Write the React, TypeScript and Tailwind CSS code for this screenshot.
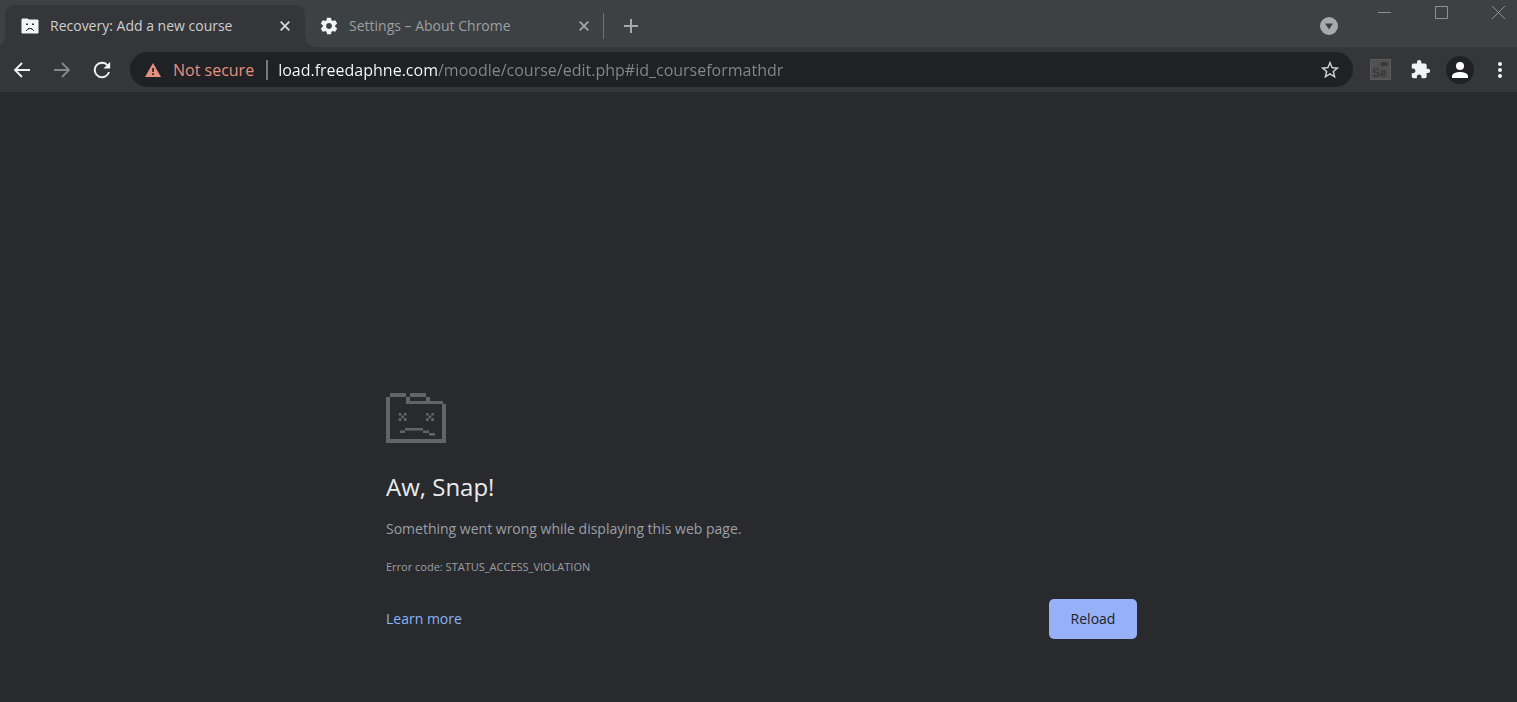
import type { ReactNode } from 'react';

const FolderFavicon = () => (
  <svg width="18" height="16" viewBox="0 0 18 16" aria-hidden="true">
    <path d="M1 1h5.500l1.500 1h9v13H1z" fill="#f1f3f4" stroke="#f1f3f4" strokeWidth="1" strokeLinejoin="round" />
    <path d="M5 5.500h2v1.500H5zM11 5.500h2v1.500h-2zM7 10h4v1H7zM6 11h1.500v1H6zM10.500 11H12v1h-1.500zM5 12h1v1H5zM12 12h1v1h-1z" fill="#35363a" />
  </svg>
);

const Gear = () => (
  <svg width="20" height="20" viewBox="0 0 24 24" fill="#f1f3f4" aria-hidden="true">
    <path d="M19.43 12.98c.04-.32.07-.64.07-.98s-.03-.66-.07-.98l2.11-1.65c.19-.15.24-.42.12-.64l-2-3.46c-.12-.22-.39-.3-.61-.22l-2.49 1c-.52-.4-1.08-.73-1.69-.98l-.38-2.65A.49.49 0 0 0 14 2h-4c-.25 0-.46.18-.49.42l-.38 2.65c-.61.25-1.17.59-1.69.98l-2.49-1c-.23-.09-.49 0-.61.22l-2 3.46c-.13.22-.07.49.12.64l2.11 1.65c-.04.32-.07.65-.07.98s.03.66.07.98l-2.11 1.65c-.19.15-.24.42-.12.64l2 3.46c.12.22.39.3.61.22l2.49-1c.52.4 1.08.73 1.69.98l.38 2.65c.03.24.24.42.49.42h4c.25 0 .46-.18.49-.42l.38-2.65c.61-.25 1.17-.59 1.69-.98l2.49 1c.23.09.49 0 .61-.22l2-3.46c.12-.22.07-.49-.12-.64l-2.11-1.65zM12 15.5c-1.93 0-3.5-1.57-3.5-3.5s1.57-3.5 3.5-3.5 3.5 1.57 3.5 3.5-1.57 3.5-3.5 3.5z" />
  </svg>
);

const Cross = () => (
  <svg width="10" height="10" viewBox="0 0 10 10" stroke="currentColor" strokeWidth="1.8" aria-hidden="true">
    <path d="M.7.7l8.6 8.6M9.3.7L.7 9.3" />
  </svg>
);

const Arrow = ({ flip = false }: { flip?: boolean }) => (
  <svg width="18" height="16" viewBox="0 0 18 16" fill="none" stroke="currentColor" strokeWidth="1.8" className={flip ? 'rotate-180' : ''} aria-hidden="true">
    <path d="M17 8H2M9 1L2 8l7 7" />
  </svg>
);

const ReloadIcon = () => (
  <svg width="22" height="22" viewBox="0 0 24 24" fill="currentColor" aria-hidden="true">
    <path d="M18.400 5.600A9 9 0 1 0 20.700 14.300h-2.100A6.900 6.900 0 1 1 12 5.100c1.900 0 3.600.8 4.900 2L13.600 10.400H20.900V3.100z" />
  </svg>
);

const Warning = () => (
  <svg width="16" height="14" viewBox="0 0 16 14" aria-hidden="true">
    <path d="M8 0l8 14H0z" fill="#e6907f" />
    <path d="M7.2 5h1.7v4H7.2zM7.2 10.3h1.7V12H7.2z" fill="#202124" />
  </svg>
);

const Star = () => (
  <svg width="22" height="22" viewBox="0 0 24 24" fill="#cfd1d4" aria-hidden="true">
    <path d="M22 9.24l-7.19-.62L12 2 9.19 8.63 2 9.24l5.46 4.73L5.82 21 12 17.27 18.18 21l-1.63-7.03L22 9.24zM12 15.4l-3.76 2.27 1-4.28-3.32-2.88 4.38-.38L12 6.1l1.71 4.04 4.38.38-3.32 2.88 1 4.28L12 15.4z" />
  </svg>
);

const Selenium = () => (
  <svg width="21" height="21" viewBox="0 0 21 21" aria-hidden="true">
    <rect x="0.5" y="0.5" width="20" height="20" fill="#505050" stroke="#5b5b5b" />
    <path d="M11 3h5v1.400l2-1V7l-2-1v1h-5z" fill="#38393b" />
    <text x="2" y="18" fontFamily="Liberation Sans, Arial, sans-serif" fontSize="12" fontWeight="700" fill="#38393b">Se</text>
  </svg>
);

const Puzzle = () => (
  <svg width="21" height="21" viewBox="0 0 24 24" fill="#f1f3f4" aria-hidden="true">
    <path d="M20.5 11H19V7c0-1.100-.9-2-2-2h-4V3.500a2.500 2.500 0 0 0-5 0V5H4c-1.100 0-1.990.9-1.990 2v3.800H3.500c1.490 0 2.700 1.210 2.700 2.700s-1.210 2.700-2.700 2.700H2V20c0 1.100.9 2 2 2h3.800v-1.500c0-1.490 1.210-2.700 2.700-2.700s2.700 1.210 2.700 2.700V22H17c1.100 0 2-.9 2-2v-4h1.500a2.500 2.500 0 0 0 0-5z" />
  </svg>
);

const SadFolder = () => (
  <svg width="60" height="50" viewBox="0 0 60 50" fill="#626468" shapeRendering="crispEdges" aria-hidden="true">
    <path d="M4 0h16v4H4zM24 0h16v4H24zM0 4h4v46H0zM20 4h4v4h-4zM40 4h4v4h-4zM20 8h37v3H20zM56 11h4v39h-4zM4 46h52v4H4z" />
    <path shapeRendering="auto" d="M12.700 20h2.600v2.600h-2.600zM18 20h2.600v2.600H18zM15.300 22.600H18v2.700h-2.700zM12.700 25.300h2.600V28h-2.600zM18 25.300h2.600V28H18zM40 20h2.600v2.600H40zM45.300 20h2.700v2.600h-2.700zM42.600 22.600h2.700v2.700h-2.700zM40 25.300h2.600V28H40zM45.300 25.300H48V28h-2.700z" />
    <path shapeRendering="auto" d="M14 37.600h5V40h-5zM19 35h18v2.600H19zM37 37.600h6V40h-6zM43 40h6v2.600h-6z" />
  </svg>
);

const IconButton = ({ label, className = '', children }: { label: string; className?: string; children: ReactNode }) => (
  <button type="button" aria-label={label} className={`flex shrink-0 items-center justify-center ${className}`}>
    {children}
  </button>
);

function TabStrip() {
  return (
    <header className="flex h-[47px] items-start bg-[#3d4144] pl-[5px]">
      <div role="tablist" className="flex pt-[5px]">
        <div className="relative flex h-[42px] w-[300px] items-center rounded-t-[10px] bg-[#35363a] pr-[15px] pl-4">
          <FolderFavicon />
          <button type="button" role="tab" aria-selected="true" className="ml-[11px] flex-1 truncate text-left text-[14px] leading-5 text-[#cdced0]">
            Recovery: Add a new course
          </button>
          <IconButton label="Close Recovery tab" className="text-[#d5d7d9]">
            <Cross />
          </IconButton>
          <svg className="absolute right-[-10px] bottom-0" width="10" height="10" viewBox="0 0 10 10" aria-hidden="true">
            <path d="M0 0a10 10 0 0 0 10 10H0z" fill="#35363a" />
          </svg>
          <svg className="absolute bottom-0 left-[-10px]" width="10" height="10" viewBox="0 0 10 10" aria-hidden="true">
            <path d="M10 0a10 10 0 0 1-10 10h10z" fill="#35363a" />
          </svg>
        </div>
        <div className="flex h-[42px] w-[298px] items-center pr-[14px] pl-[14px]">
          <Gear />
          <button type="button" role="tab" aria-selected="false" className="ml-[10px] flex-1 truncate text-left text-[14px] leading-5 text-[#9c9fa2]">
            Settings – About Chrome
          </button>
          <IconButton label="Close Settings tab" className="text-[#a3a6a9]">
            <Cross />
          </IconButton>
        </div>
      </div>
      <div className="mt-[13px] h-[26px] w-px bg-[#707376]" />
      <IconButton label="New tab" className="mt-3 ml-[13px] size-7 text-[#a7aaad]">
        <svg width="16" height="16" viewBox="0 0 16 16" stroke="currentColor" strokeWidth="2" aria-hidden="true">
          <path d="M8 1v14M1 8h14" />
        </svg>
      </IconButton>
      <IconButton label="Search tabs" className="mt-[17px] mr-[27px] ml-auto">
        <svg width="18" height="18" viewBox="0 0 18 18" aria-hidden="true">
          <circle cx="9" cy="9" r="9" fill="#a7aaad" />
          <path d="M5 6.500h8L9 12.500z" fill="#3c4043" />
        </svg>
      </IconButton>
      <div className="flex text-[#8e9093]">
        <IconButton label="Minimize" className="h-[25px] w-[39px]">
          <svg width="13" height="13" viewBox="0 0 13 13" stroke="currentColor" aria-hidden="true">
            <path d="M0 6.500h13" />
          </svg>
        </IconButton>
        <IconButton label="Maximize" className="h-[25px] w-[75px]">
          <svg width="13" height="13" viewBox="0 0 13 13" fill="none" stroke="currentColor" aria-hidden="true">
            <path d="M.5.5h12v12H.5z" />
          </svg>
        </IconButton>
        <IconButton label="Close window" className="h-[25px] w-[38px]">
          <svg width="13" height="13" viewBox="0 0 13 13" stroke="currentColor" aria-hidden="true">
            <path d="M0 0l13 13M13 0L0 13" />
          </svg>
        </IconButton>
      </div>
    </header>
  );
}

function Toolbar() {
  return (
    <nav className="flex h-[45px] items-center bg-[#35363a] pl-[2px]">
      <IconButton label="Back" className="size-10 text-[#f1f3f4]">
        <Arrow />
      </IconButton>
      <IconButton label="Forward" className="size-10 text-[#85878a]">
        <Arrow flip />
      </IconButton>
      <IconButton label="Reload page" className="size-10 text-[#f1f3f4]">
        <ReloadIcon />
      </IconButton>
      <div className="ml-2 flex h-[35px] flex-1 items-center rounded-full bg-[#202124] pr-3 pl-[15px]">
        <Warning />
        <button type="button" className="ml-3 shrink-0 text-[16px] leading-6 text-[#e6907f]">
          Not secure
        </button>
        <div className="mr-[10px] ml-3 h-5 w-[2px] shrink-0 bg-[#76787b]" />
        <input
          aria-label="Address"
          defaultValue="load.freedaphne.com/moodle/course/edit.php#id_courseformathdr"
          spellCheck={false}
          className="min-w-0 flex-1 bg-[linear-gradient(90deg,#fff_160px,#85888b_160px)] bg-clip-text text-[16px] leading-6 text-transparent outline-none"
        />
        <IconButton label="Bookmark this page">
          <Star />
        </IconButton>
      </div>
      <IconButton label="Selenium IDE" className="ml-[7px] size-10">
        <Selenium />
      </IconButton>
      <IconButton label="Extensions" className="size-10">
        <Puzzle />
      </IconButton>
      <IconButton label="Profile" className="size-10">
        <svg width="28" height="28" viewBox="0 0 28 28" aria-hidden="true">
          <circle cx="14" cy="14" r="14" fill="#202124" />
          <circle cx="14" cy="10" r="4" fill="#fff" />
          <path d="M6 22v-1.800c0-3 5-4.200 8-4.200s8 1.200 8 4.200V22z" fill="#fff" />
        </svg>
      </IconButton>
      <IconButton label="Menu" className="mr-[-3px] size-10">
        <svg width="4" height="18" viewBox="0 0 4 18" fill="#f1f3f4" aria-hidden="true">
          <circle cx="2" cy="3" r="2" />
          <circle cx="2" cy="9" r="2" />
          <circle cx="2" cy="15" r="2" />
        </svg>
      </IconButton>
    </nav>
  );
}

export default function App() {
  return (
    <div className="flex min-h-screen flex-col bg-[#292a2d] font-['Open_Sans','Noto_Sans',sans-serif]">
      <TabStrip />
      <Toolbar />
      <main className="flex-1 border-t border-[#2b282d] pt-[300px] pr-6 pb-12 pl-[30px]">
        <section className="mx-auto max-w-[751px]">
          <SadFolder />
          <h1 className="mt-7 text-[24px] leading-8 text-[#e8eaed]">Aw, Snap!</h1>
          <p className="mt-[14px] text-[14px] leading-6 text-[#9aa0a6]">Something went wrong while displaying this web page.</p>
          <p className="mt-[18px] text-[11px] leading-4 text-[#9aa0a6]">Error code: STATUS_ACCESS_VIOLATION</p>
          <div className="mt-6 flex items-center justify-between">
            <a href="#learn-more" className="text-[14px] leading-6 text-[#8ab4f8]">
              Learn more
            </a>
            <button type="button" className="h-10 w-[88px] rounded-[5px] bg-[#96b1f8] text-[14px] leading-6 text-[#202124]">
              Reload
            </button>
          </div>
        </section>
      </main>
    </div>
  );
}
